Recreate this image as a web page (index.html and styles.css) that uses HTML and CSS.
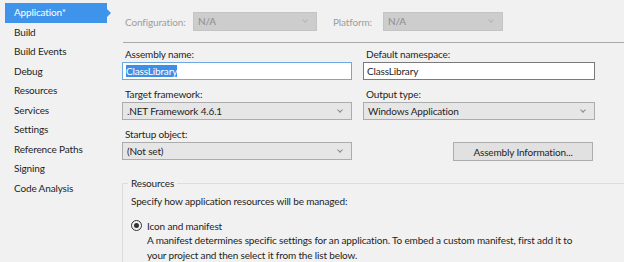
FILE: index.html
```html
<!DOCTYPE html>
<html lang="en">
<head>
    <meta charset="UTF-8">
    <title>Application Properties</title>
    <link rel="stylesheet" href="styles.css">
</head>
<body>
    <div class="page">
        <ul class="nav">
            <li class="active">Application*</li>
            <li>Build</li>
            <li>Build Events</li>
            <li>Debug</li>
            <li>Resources</li>
            <li>Services</li>
            <li>Settings</li>
            <li>Reference Paths</li>
            <li>Signing</li>
            <li>Code Analysis</li>
        </ul>

        <div class="content">
            <div class="config-row">
                <span class="dim-label">Configuration:</span>
                <div class="select disabled config-select">N/A<span class="chev"></span></div>
                <span class="dim-label platform-label">Platform:</span>
                <div class="select disabled platform-select">N/A<span class="chev"></span></div>
            </div>

            <div class="separator"></div>

            <div class="fields">
                <div class="field">
                    <label>Assembly name:</label>
                    <div class="textbox focused"><span class="selected-text">ClassLibrary</span></div>
                </div>
                <div class="field">
                    <label>Default namespace:</label>
                    <div class="textbox">ClassLibrary</div>
                </div>
                <div class="field">
                    <label>Target framework:</label>
                    <div class="select">.NET Framework 4.6.1<span class="chev"></span></div>
                </div>
                <div class="field">
                    <label>Output type:</label>
                    <div class="select">Windows Application<span class="chev"></span></div>
                </div>
                <div class="field">
                    <label>Startup object:</label>
                    <div class="select">(Not set)<span class="chev"></span></div>
                </div>
                <div class="field button-cell">
                    <button class="info-btn">Assembly Information...</button>
                </div>
            </div>

            <div class="group">
                <span class="group-title">Resources</span>
                <p class="group-intro">Specify how application resources will be managed:</p>
                <div class="radio-row">
                    <span class="radio"></span>
                    <span>Icon and manifest</span>
                </div>
                <p class="radio-desc">A manifest determines specific settings for an application. To embed a custom manifest, first add it to your project and then select it from the list below.</p>
            </div>
        </div>
    </div>
</body>
</html>
```

FILE: styles.css
```css
body {
    margin: 0;
    background-color: #f1f1f1;
    font-family: "Segoe UI", Lato, sans-serif;
    font-size: 10px;
    letter-spacing: -0.15px;
    color: #1e1e1e;
}

.page {
    display: flex;
    width: 624px;
    height: 262px;
    overflow: hidden;
}

.nav {
    list-style: none;
    margin: 0;
    padding: 3px 0 0 5px;
    width: 117px;
    flex-shrink: 0;
    box-sizing: border-box;
}

.nav li {
    height: 19.5px;
    line-height: 19.5px;
    padding-left: 9px;
    width: 102px;
    box-sizing: border-box;
    position: relative;
}

.nav li.active {
    background-color: #3e94ea;
    color: white;
}

.nav li.active::after {
    content: "";
    position: absolute;
    right: -4px;
    top: 6px;
    border-top: 4px solid transparent;
    border-bottom: 4px solid transparent;
    border-left: 4px solid #3e94ea;
}

.content {
    flex: 1;
    padding-left: 5px;
    padding-top: 12px;
}

.config-row {
    display: flex;
    align-items: center;
    height: 19px;
    padding-left: 3px;
}

.dim-label {
    color: #9d9d9d;
    width: 68px;
}

.platform-label {
    width: 50px;
    margin-left: 16px;
}

.select {
    position: relative;
    height: 18px;
    line-height: 16px;
    box-sizing: border-box;
    border: 1px solid #acacac;
    background-color: #e6e6e6;
    padding-left: 4px;
}

.select.disabled {
    background-color: #cdcdcd;
    border-color: #c4c4c4;
    color: #8c8c8c;
    height: 19px;
    line-height: 17px;
}

.config-select {
    width: 124px;
}

.platform-select {
    width: 120px;
}

.chev {
    position: absolute;
    right: 9px;
    top: 5px;
    width: 3px;
    height: 3px;
    border-right: 1px solid #8a8a8a;
    border-bottom: 1px solid #8a8a8a;
    transform: rotate(45deg);
}

.disabled .chev {
    border-color: #b5b5b5;
}

.separator {
    height: 1px;
    background-color: #a9a9a9;
    margin: 11px 0 0 1px;
}

.fields {
    display: grid;
    grid-template-columns: 230px 232px;
    column-gap: 11px;
    row-gap: 7px;
    margin-top: 4px;
}

.field label {
    display: block;
    height: 14px;
    line-height: 14px;
    padding-left: 3px;
    margin-bottom: 1px;
}

.textbox {
    height: 18px;
    line-height: 16px;
    box-sizing: border-box;
    border: 1px solid #7a7a7a;
    background-color: white;
    padding-left: 3px;
}

.textbox.focused {
    border-color: #6ea8e0;
}

.selected-text {
    background-color: #3d8fe6;
    color: white;
}

.button-cell {
    display: flex;
    justify-content: flex-end;
    align-items: flex-end;
}

.info-btn {
    width: 140px;
    height: 19px;
    margin-right: 2px;
    margin-bottom: -1px;
    font-family: inherit;
    font-size: 10px;
    letter-spacing: inherit;
    color: #1e1e1e;
    background-color: #e1e1e1;
    border: 1px solid #adadad;
    padding: 0;
}

.group {
    position: relative;
    margin-top: 23px;
    border-top: 1px solid #dcdcdc;
    border-left: 1px solid #dcdcdc;
    padding: 10px 0 0 8px;
    margin-right: -20px;
}

.group-title {
    position: absolute;
    top: -8px;
    left: 5px;
    padding: 0 3px;
    background-color: #f1f1f1;
    line-height: 15px;
}

.group-intro {
    margin: 0;
    line-height: 15px;
}

.radio-row {
    display: flex;
    align-items: center;
    gap: 5px;
    margin-top: 9px;
    height: 15px;
}

.radio {
    width: 9px;
    height: 9px;
    border: 1px solid #333;
    border-radius: 50%;
    position: relative;
}

.radio::after {
    content: "";
    position: absolute;
    left: 2px;
    top: 2px;
    width: 5px;
    height: 5px;
    border-radius: 50%;
    background-color: #333;
}

.radio-desc {
    margin: 0;
    padding-left: 16px;
    width: 440px;
    line-height: 14.5px;
}
```
